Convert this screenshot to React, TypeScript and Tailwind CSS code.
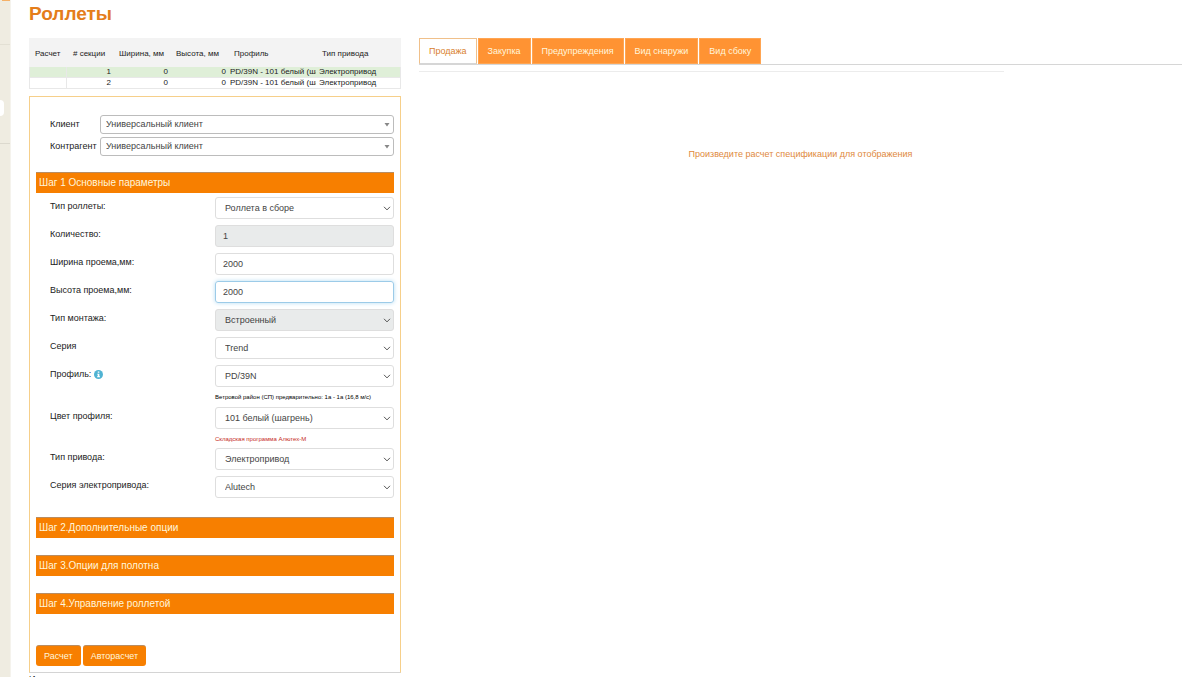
import type { ReactNode } from "react";

const sections = [
  { id: 1, width: 0, height: 0, profile: "PD/39N - 101 белый (ша", drive: "Электропривод" },
  { id: 2, width: 0, height: 0, profile: "PD/39N - 101 белый (ша", drive: "Электропривод" },
];

const tabs = ["Продажа", "Закупка", "Предупреждения", "Вид снаружи", "Вид сбоку"];

function StepHeading({ children }: { children: ReactNode }) {
  return (
    <h2 className="h-[21px] border-t border-[#b98d62] bg-[#f77f00] px-[3px] text-[10px] leading-[20px] text-[#fff6dc]">
      {children}
    </h2>
  );
}

function Field({ id, label, info, note, children }: { id: string; label: string; info?: boolean; note?: ReactNode; children: ReactNode }) {
  return (
    <div className="grid grid-cols-[165px_1fr] pl-[14px]">
      <div className="flex h-[18px] items-center gap-[3px]">
        <label htmlFor={id}>{label}</label>
        {info && (
          <svg viewBox="0 0 16 16" className="size-[9px]" role="img" aria-label="Справка">
            <circle cx="8" cy="8" r="8" fill="#4fb3d3" />
            <path d="M6.7 2.8h2.8v2.3H6.7zM5.6 6.5h3.9v4.7h1.2v1.7H5.5v-1.7h1.2V8.2H5.6z" fill="#fff" />
          </svg>
        )}
      </div>
      <div>
        {children}
        {note}
      </div>
    </div>
  );
}

function SelectBox({ id, value, disabled }: { id: string; value: string; disabled?: boolean }) {
  return (
    <div className="relative">
      <select
        id={id}
        disabled={disabled}
        className="block h-[22px] w-full appearance-none rounded-[3px] border border-[#dedede] bg-white pr-5 pl-[9px] text-[#444] disabled:bg-[#e9ebeb] disabled:opacity-100"
      >
        <option>{value}</option>
      </select>
      <svg viewBox="0 0 8 5" className="pointer-events-none absolute top-[9px] right-[3px] h-[5px] w-2" fill="none" stroke="#555" strokeWidth="1">
        <path d="M1 .8 4 3.9 7 .8" />
      </svg>
    </div>
  );
}

function TextBox({ id, value, disabled, active }: { id: string; value: string; disabled?: boolean; active?: boolean }) {
  return (
    <input
      id={id}
      defaultValue={value}
      disabled={disabled}
      className={
        "block h-[22px] w-full rounded-[3px] border px-[7px] text-[#444] disabled:bg-[#e9ebeb] " +
        (active ? "border-[#9ccbe8] shadow-[0_0_4px_#b5dcf2]" : "border-[#dedede]")
      }
    />
  );
}

function ClientSelect({ id, label }: { id: string; label: string }) {
  return (
    <div className="grid grid-cols-[50px_1fr] items-center pl-[14px]">
      <label htmlFor={id}>{label}</label>
      <div className="relative">
        <select id={id} className="block h-[19px] w-full appearance-none rounded-[3px] border border-[#bcbcbc] bg-white pr-4 pl-[5px] text-[#444]">
          <option>Универсальный клиент</option>
        </select>
        <svg viewBox="0 0 6 4" className="pointer-events-none absolute top-2 right-1 h-[4px] w-[6px]" fill="#888">
          <path d="M.5 0h5L3 3.6z" />
        </svg>
      </div>
    </div>
  );
}

export default function App() {
  return (
    <div className="flex min-h-screen bg-white font-['Liberation_Sans',Arial,sans-serif] text-[9px] leading-[11px] text-[#222]">
      <aside className="w-[11px] shrink-0 border-r border-[#f5f3ed] bg-[#efece1]">
        <div className="ml-[2px] h-px bg-[#f5b168]" />
        <div className="mt-[43px] h-px bg-[#e3e0d4]" />
        <div className="mt-[55px] h-4 w-1 rounded-r-sm bg-white" />
        <div className="mt-[27px] h-px bg-[#dcd9ce]" />
      </aside>

      <main className="min-w-0 flex-1 px-[18px]">
        <h1 className="h-[38px] text-[19px] leading-[28px] font-bold text-[#e47d1b]">Роллеты</h1>

        <div className="flex items-start gap-[18px]">
          <div className="w-[372px] shrink-0">
            <table className="w-full table-fixed border-separate border-spacing-0 text-[8px] leading-[10px]">
              <colgroup>
                <col className="w-[38px]" />
                <col className="w-[46px]" />
                <col className="w-[57px]" />
                <col className="w-[58px]" />
                <col className="w-[88px]" />
                <col />
              </colgroup>
              <thead>
                <tr className="h-[29px] bg-[#f3f3f3] text-left whitespace-nowrap">
                  {["Расчет", "# секции", "Ширина, мм", "Высота, мм", "Профиль", "Тип привода"].map((name) => (
                    <th key={name} className="p-0 pt-[2px] pl-[6px] font-normal">
                      {name}
                    </th>
                  ))}
                </tr>
              </thead>
              <tbody>
                {sections.map((s) => (
                  <tr key={s.id} className="whitespace-nowrap odd:bg-[#dfefd8] *:border-b *:border-[#e8e8e8]">
                    <td className="border-x p-0" />
                    <td className="p-0 pr-[2px] text-right">{s.id}</td>
                    <td className="p-0 pr-[2px] text-right">{s.width}</td>
                    <td className="p-0 pr-[2px] text-right">{s.height}</td>
                    <td className="overflow-hidden p-0 pl-[2px]">
                      <div className="overflow-hidden">{s.profile}</div>
                    </td>
                    <td className="border-r p-0 pl-[3px]">{s.drive}</td>
                  </tr>
                ))}
              </tbody>
            </table>

            <form
              className="mt-[7px] border-x border-t border-b border-x-[#f6cf8a] border-t-[#f6cf8a] border-b-[#d4d4d4] px-[6px] pb-[6px]"
              onSubmit={(e) => e.preventDefault()}
            >
              <div className="grid gap-[3px] pt-[18px] pb-4">
                <ClientSelect id="client" label="Клиент" />
                <ClientSelect id="agent" label="Контрагент" />
              </div>

              <StepHeading>Шаг 1 Основные параметры</StepHeading>
              <div className="grid gap-[6px] pt-1 pb-[19px]">
                <Field id="type" label="Тип роллеты:">
                  <SelectBox id="type" value="Роллета в сборе" />
                </Field>
                <Field id="count" label="Количество:">
                  <TextBox id="count" value="1" disabled />
                </Field>
                <Field id="width" label="Ширина проема,мм:">
                  <TextBox id="width" value="2000" />
                </Field>
                <Field id="height" label="Высота проема,мм:">
                  <TextBox id="height" value="2000" active />
                </Field>
                <Field id="mount" label="Тип монтажа:">
                  <SelectBox id="mount" value="Встроенный" disabled />
                </Field>
                <Field id="series" label="Серия">
                  <SelectBox id="series" value="Trend" />
                </Field>
                <Field
                  id="profile"
                  label="Профиль:"
                  info
                  note={<p className="h-[14px] pt-[5px] text-[6px] leading-[10px] whitespace-nowrap text-black">Ветровой район (СП) предварительно: 1а - 1а (16,8 м/с)</p>}
                >
                  <SelectBox id="profile" value="PD/39N" />
                </Field>
                <Field
                  id="color"
                  label="Цвет профиля:"
                  note={<p className="h-[13px] pt-[5px] text-[6px] leading-[10px] whitespace-nowrap text-[#c62b1c]">Складская программа Алютех-М</p>}
                >
                  <SelectBox id="color" value="101 белый (шагрень)" />
                </Field>
                <Field id="drive" label="Тип привода:">
                  <SelectBox id="drive" value="Электропривод" />
                </Field>
                <Field id="driveSeries" label="Серия электропривода:">
                  <SelectBox id="driveSeries" value="Alutech" />
                </Field>
              </div>

              <div className="grid gap-[17px]">
                <StepHeading>Шаг 2.Дополнительные опции</StepHeading>
                <StepHeading>Шаг 3.Опции для полотна</StepHeading>
                <StepHeading>Шаг 4.Управление роллетой</StepHeading>
              </div>

              <div className="mt-[31px] flex gap-[2px]">
                <button className="h-[21px] rounded-[3px] border-t border-[#b98d62] bg-[#f77f00] px-2 text-[#fff6dc]">Расчет</button>
                <button className="h-[21px] rounded-[3px] border-t border-[#b98d62] bg-[#f77f00] px-2 text-[#fff6dc]">Авторасчет</button>
              </div>
            </form>
            <p className="pt-px">Итого</p>
          </div>

          <section className="min-w-0 flex-1">
            <div role="tablist" className="flex gap-px border-b border-[#d6d6d6]">
              {tabs.map((tab, i) => (
                <button
                  key={tab}
                  role="tab"
                  aria-selected={i === 0}
                  className={
                    "h-[26px] border px-[9px] whitespace-nowrap " +
                    (i === 0 ? "border-[#f0c08a] border-b-[#d6d6d6] bg-white text-[#d97f2e]" : "border-[#ffa552] bg-[#ff9333] text-[#fff6dc]")
                  }
                >
                  {tab}
                </button>
              ))}
            </div>
            <div className="mt-[6px] mr-[178px] h-px bg-[#ececec]" />
            <p className="mt-[77px] text-center text-[#e0893c]">Произведите расчет спецификации для отображения</p>
          </section>
        </div>
      </main>
    </div>
  );
}
